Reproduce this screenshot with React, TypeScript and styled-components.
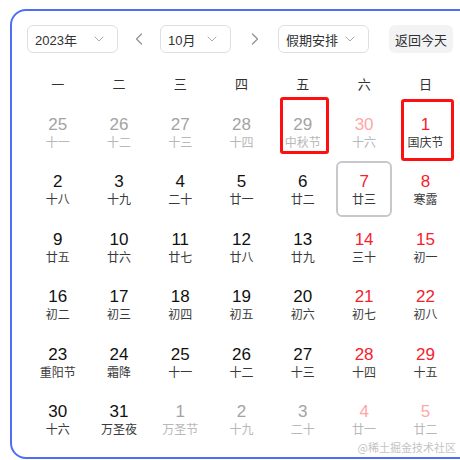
import React from 'react';
import styled, { createGlobalStyle } from 'styled-components';
import { ChevronDown, ChevronLeft, ChevronRight } from 'lucide-react';

const GlobalStyle = createGlobalStyle`
  html, body {
    margin: 0;
    padding: 0;
    background: #ffffff;
    overflow: hidden;
  }
  body {
    font-family: "Liberation Sans", "Noto Sans CJK SC", sans-serif;
  }
`;

interface Day {
  num: number;
  lunar: string;
  other?: boolean;
  weekend?: boolean;
  mark?: [number, number, number, number];
  selected?: boolean;
}

const rows: [number, string][][] = [
  [[25, '十一'], [26, '十二'], [27, '十三'], [28, '十四'], [29, '中秋节'], [30, '十六'], [1, '国庆节']],
  [[2, '十八'], [3, '十九'], [4, '二十'], [5, '廿一'], [6, '廿二'], [7, '廿三'], [8, '寒露']],
  [[9, '廿五'], [10, '廿六'], [11, '廿七'], [12, '廿八'], [13, '廿九'], [14, '三十'], [15, '初一']],
  [[16, '初二'], [17, '初三'], [18, '初四'], [19, '初五'], [20, '初六'], [21, '初七'], [22, '初八']],
  [[23, '重阳节'], [24, '霜降'], [25, '十一'], [26, '十二'], [27, '十三'], [28, '十四'], [29, '十五']],
  [[30, '十六'], [31, '万圣夜'], [1, '万圣节'], [2, '十九'], [3, '二十'], [4, '廿一'], [5, '廿二']],
];

const days: Day[] = rows.flatMap((row, r) =>
  row.map(([num, lunar], c) => {
    const other = (r === 0 && c < 6) || (r === 5 && c > 1);
    const d: Day = { num, lunar, other, weekend: c >= 5 };
    if (r === 0 && c === 4) d.mark = [-9, -23, 48, 26];
    if (r === 0 && c === 6) d.mark = [-7, -24, 55, 29];
    if (r === 1 && c === 5) d.selected = true;
    return d;
  })
);

const weekdays = ['一', '二', '三', '四', '五', '六', '日'];

const App: React.FC = () => (
  <>
    <GlobalStyle />
    <Card>
      <Toolbar>
        <Select $w={91}>
          <span>2023年</span>
          <ChevronDown size={16} strokeWidth={1.5} color="#a8abb2" />
        </Select>
        <Arrow $w={42}>
          <ChevronLeft size={20} strokeWidth={1.5} />
        </Arrow>
        <Select $w={71}>
          <span>10月</span>
          <ChevronDown size={16} strokeWidth={1.5} color="#a8abb2" />
        </Select>
        <Arrow $w={47}>
          <ChevronRight size={20} strokeWidth={1.5} />
        </Arrow>
        <Select $w={91}>
          <span>假期安排</span>
          <ChevronDown size={16} strokeWidth={1.5} color="#a8abb2" />
        </Select>
        <TodayButton>返回今天</TodayButton>
      </Toolbar>

      <WeekHeader>
        {weekdays.map((w) => (
          <WeekLabel key={w}>{w}</WeekLabel>
        ))}
      </WeekHeader>

      <Grid>
        {days.map((d, i) => (
          <Slot key={i}>
            <Cell $selected={d.selected}>
              <Num $other={d.other} $weekend={d.weekend}>
                {d.num}
              </Num>
              <Lunar $other={d.other}>{d.lunar}</Lunar>
              {d.mark && (
                <Mark
                  style={{
                    top: d.mark[0],
                    left: `calc(50% + ${d.mark[1]}px)`,
                    height: d.mark[2] - d.mark[0],
                    width: d.mark[3] - d.mark[1],
                  }}
                />
              )}
            </Cell>
          </Slot>
        ))}
      </Grid>

      <Watermark>@稀土掘金技术社区</Watermark>
    </Card>
  </>
);

const Card = styled.div`
  position: relative;
  box-sizing: border-box;
  margin: 9px 0 0 10px;
  width: 470px;
  height: 450px;
  border: 2px solid #4f6ef5;
  border-radius: 16px;
  padding: 14px 0 0 15px;
`;

const Toolbar = styled.div`
  display: flex;
  align-items: center;
  height: 28px;
`;

const Select = styled.div<{ $w: number }>`
  box-sizing: border-box;
  width: ${(p) => p.$w}px;
  height: 28px;
  display: flex;
  align-items: center;
  justify-content: space-between;
  padding: 0 10px 0 7px;
  border: 1px solid #dcdfe6;
  border-radius: 6px;
  font-size: 13px;
  color: #303133;
`;

const Arrow = styled.div<{ $w: number }>`
  width: ${(p) => p.$w}px;
  display: flex;
  justify-content: center;
  color: #909399;
`;

const TodayButton = styled.div`
  margin-left: 20px;
  width: 64px;
  height: 28px;
  display: flex;
  align-items: center;
  justify-content: center;
  background: #f3f3f4;
  border-radius: 6px;
  font-size: 13px;
  color: #303133;
`;

const WeekHeader = styled.div`
  display: grid;
  grid-template-columns: repeat(7, 61.3px);
  margin-top: 22px;
  height: 20px;
`;

const WeekLabel = styled.div`
  text-align: center;
  font-size: 13px;
  line-height: 20px;
  color: #303133;
`;

const Grid = styled.div`
  display: grid;
  grid-template-columns: repeat(7, 61.3px);
  grid-auto-rows: 57.4px;
  margin-top: 9px;
`;

const Slot = styled.div`
  display: flex;
  justify-content: center;
`;

const Cell = styled.div<{ $selected?: boolean }>`
  position: relative;
  box-sizing: border-box;
  width: 56px;
  height: 56px;
  padding-top: 8px;
  display: flex;
  flex-direction: column;
  align-items: center;
  border: 2px solid ${(p) => (p.$selected ? '#c6c8cc' : 'transparent')};
  border-radius: 6px;
`;

const Num = styled.div<{ $other?: boolean; $weekend?: boolean }>`
  font-size: 17px;
  line-height: 22px;
  color: ${(p) =>
    p.$other
      ? p.$weekend
        ? '#ffa6a6'
        : '#a3a3a3'
      : p.$weekend
        ? '#f5222d'
        : '#111111'};
`;

const Lunar = styled.div<{ $other?: boolean }>`
  font-size: 12px;
  line-height: 16px;
  margin-top: -1px;
  white-space: nowrap;
  color: ${(p) => (p.$other ? '#b8b8b8' : '#3a3a3a')};
`;

const Mark = styled.div`
  position: absolute;
  box-sizing: border-box;
  border: 3px solid #ff1010;
  border-radius: 3px;
`;

const Watermark = styled.div`
  position: absolute;
  right: 22px;
  bottom: 2px;
  font-size: 11px;
  color: #c4c4c4;
  font-family: "Noto Sans CJK SC", sans-serif;
`;

export default App;
